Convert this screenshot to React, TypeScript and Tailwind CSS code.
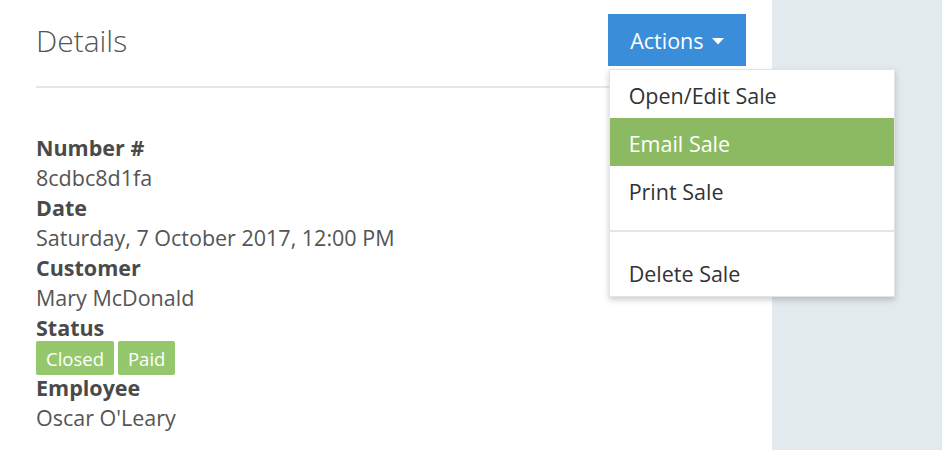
import React from 'react';

const fields = [
    { label: 'Number #', value: '8cdbc8d1fa' },
    { label: 'Date', value: 'Saturday, 7 October 2017, 12:00 PM' },
    { label: 'Customer', value: 'Mary McDonald' },
];

function ActionsMenu() {
    return (
        <div className="relative">
            <button className="flex h-[52px] items-center bg-[#3a8ed9] pl-[22.5px] pr-[22.5px] pt-[3px] text-[21.5px] text-white">
                <span>Actions</span>
                <svg className="ml-[8px]" width="12" height="7" viewBox="0 0 12 7">
                    <path d="M0 0 L12 0 L6 6.5 Z" fill="#fff" />
                </svg>
            </button>
            <div className="absolute left-[1px] top-[55px] z-10 w-[286px] border border-[#e4e4e4] bg-white text-[21.5px] text-[#333] shadow-[0_3px_6px_rgba(0,0,0,0.2)]">
                <div className="flex h-[48px] items-center pl-[19px] pt-[4px]">Open/Edit Sale</div>
                <div className="flex h-[48px] items-center bg-[#8cba62] pl-[19px] pt-[4px] text-white">Email Sale</div>
                <div className="flex h-[48px] items-center pl-[19px] pt-[4px]">Print Sale</div>
                <div className="my-[16px] h-[2px] bg-[#e5e5e5]" />
                <div className="flex h-[48px] items-center pl-[19px] pt-[4px]">Delete Sale</div>
            </div>
        </div>
    );
}

export default function App() {
    return (
        <main className="flex h-[450px] w-full font-['Open_Sans',sans-serif]">
            <div className="w-[772px] bg-white pl-[36px] pr-[26px] pt-[14px]">
                <div className="flex items-center justify-between border-b-2 border-[#e6e6e6] pb-[20px]">
                    <h1 className="pt-[2px] text-[30px] font-light leading-none text-[#555]">Details</h1>
                    <ActionsMenu />
                </div>

                <div className="mt-[45px] text-[21.5px] leading-[30px] text-[#555]">
                    {fields.map((f) => (
                        <div key={f.label}>
                            <div className="font-bold text-[#4a4a4a]">{f.label}</div>
                            <div>{f.value}</div>
                        </div>
                    ))}
                    <div className="font-bold text-[#4a4a4a]">Status</div>
                    <div className="flex h-[30px] items-center gap-[4px]">
                        <span className="flex h-[34px] items-center rounded-[2px] bg-[#95c86c] px-[10px] pt-[2px] text-[18.5px] text-white">Closed</span>
                        <span className="flex h-[34px] items-center rounded-[2px] bg-[#95c86c] px-[10px] pt-[2px] text-[18.5px] text-white">Paid</span>
                    </div>
                    <div className="font-bold text-[#4a4a4a]">Employee</div>
                    <div>Oscar O'Leary</div>
                </div>
            </div>
            <div className="flex-1 bg-[#e3eaee]" />
        </main>
    );
}
